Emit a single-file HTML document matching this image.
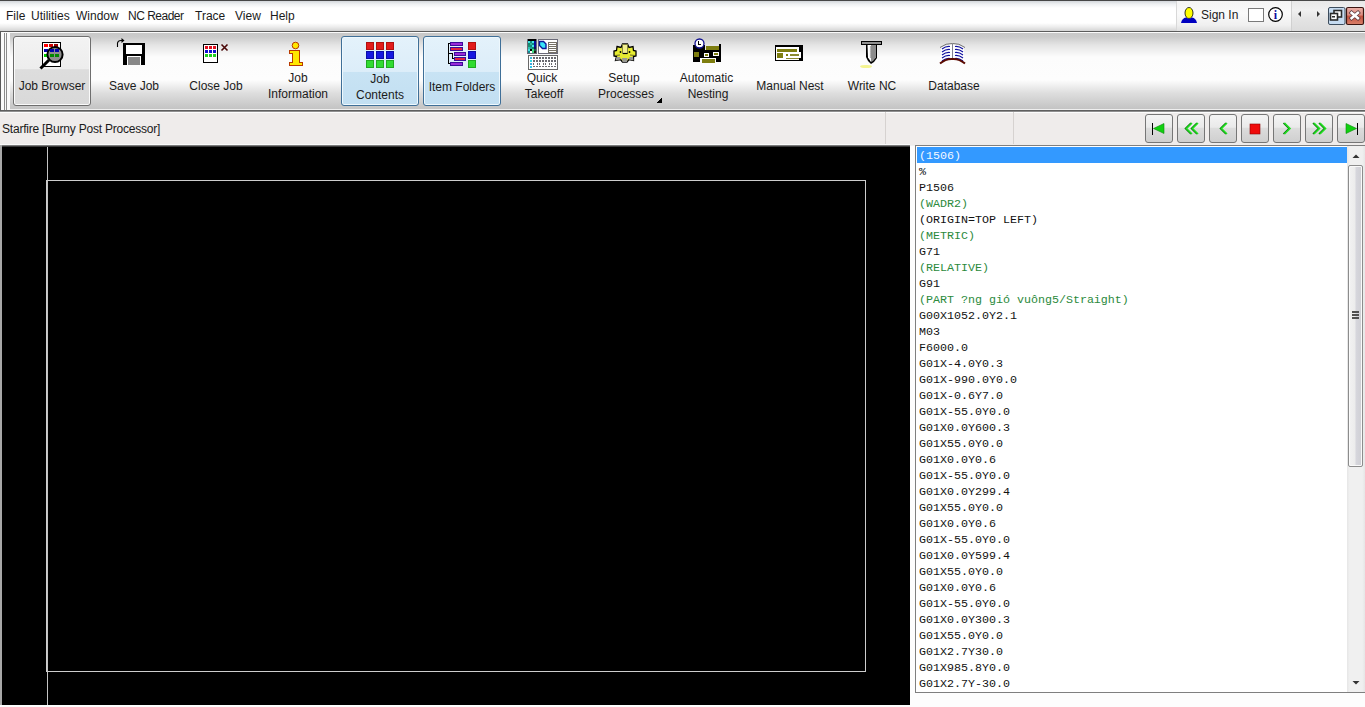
<!DOCTYPE html>
<html><head><meta charset="utf-8">
<style>
*{box-sizing:border-box;margin:0;padding:0}
html,body{width:1365px;height:707px;overflow:hidden;background:#f0f0f0;font-family:"Liberation Sans",sans-serif;font-size:12px;color:#1a1a1a}
.abs{position:absolute}
#menubar{position:absolute;left:0;top:0;width:1365px;height:31px;background:linear-gradient(#474747 0,#474747 1px,#d3d7db 1px,#eef0f2 4px,#ffffff 8px,#ffffff 23px,#ececec 27px,#d4d4d4 31px)}
.mi{position:absolute;top:9px;font-size:12px;color:#1b1b1b}
#toolbar{position:absolute;left:0;top:31px;width:1365px;height:82px;background:linear-gradient(#5c5c5c 0,#5c5c5c 1px,#ececec 1px,#ececec 2px,#c9c9c9 2px,#cbcbcb 6px,#e4e4e4 14px,#fcfcfc 26px,#fdfdfd 49px,#dedede 62px,#cacaca 74px,#c4c4c4 78px,#efefef 78px,#efefef 79px,#5f5f5f 79px,#5f5f5f 80px,#8f8f8f 80px,#8f8f8f 81px,#fcfcfc 81px)}
.tl{position:absolute;width:78px;text-align:center;font-size:12px;line-height:16px;color:#1b1b1b;white-space:nowrap}
.btn{position:absolute;top:5px;width:78px;height:69px;text-align:center}
.btn .lbl{position:absolute;left:-6px;right:-6px;font-size:12px;line-height:16px;color:#1b1b1b}
.btn svg{position:absolute;left:0;top:0}
#status{position:absolute;left:0;top:113px;width:1365px;height:32px;background:#efeceb}
#canvas{position:absolute;left:1px;top:146px;width:910px;height:559px;background:#000}
#list{position:absolute;left:915px;top:145px;width:450px;height:548px;background:#fff;border:1px solid #868686;border-right:none}
.row{position:absolute;left:919px;height:16px;font-family:"Liberation Mono",monospace;font-size:11.67px;line-height:16px;white-space:pre;color:#111}
.g{color:#2b8a3c}
.nav{position:absolute;top:114px;width:28px;height:29px;border:1px solid #767676;border-radius:3px;background:linear-gradient(#f4f4f4 0,#eaeaea 45%,#dcdcdc 50%,#cfcfcf 100%)}
</style></head><body>
<div id="menubar">
  <span class="mi" style="left:6px">File</span>
  <span class="mi" style="left:31px">Utilities</span>
  <span class="mi" style="left:76px">Window</span>
  <span class="mi" style="left:128px;letter-spacing:-0.5px">NC Reader</span>
  <span class="mi" style="left:195px">Trace</span>
  <span class="mi" style="left:235px">View</span>
  <span class="mi" style="left:270px">Help</span>
</div>
<div class="abs" style="left:1176px;top:1px;width:1px;height:30px;background:#d8d8d8"></div>
<div class="abs" style="left:1177px;top:1px;width:114px;height:30px;background:linear-gradient(#f4f4f4 0,#fafafa 40%,#f0f0f0 80%,#e0e0e0 100%)"></div>
<div class="abs" style="left:1291px;top:1px;width:1px;height:30px;background:#d0d0d0"></div>
<div class="abs" style="left:1292px;top:1px;width:73px;height:30px;background:linear-gradient(#e8e8e8 0,#f0f0f0 30%,#e4e4e4 60%,#dcdcdc 100%)"></div>
<span class="mi" style="left:1201px;top:8px">Sign In</span>
<svg class="abs" style="left:1165px;top:0" width="200" height="32" viewBox="1165 0 200 32">
 <ellipse cx="1189" cy="13" rx="4" ry="5.5" fill="#ffff00" stroke="#000" stroke-width="0.8"/>
 <path d="M1181,23 Q1182,18 1186,17.5 L1189,19 L1192,17.5 Q1196,18 1197,23 Z" fill="#0000c0"/>
 <rect x="1248.5" y="8.5" width="15" height="13" fill="#fff" stroke="#7a7a7a"/>
 <circle cx="1275.5" cy="14.5" r="6.8" fill="#fff" stroke="#000" stroke-width="1.2"/>
 <text x="1275.5" y="19" font-family="Liberation Serif" font-weight="bold" font-size="12" fill="#1010a0" text-anchor="middle">i</text>
 <path d="M1301,11 L1298,14 L1301,17 Z" fill="#333"/>
 <path d="M1317,11 L1320,14 L1317,17 Z" fill="#333"/>
  <defs><linearGradient id="cg" x1="0" y1="0" x2="0" y2="1"><stop offset="0" stop-color="#eab0a8"/><stop offset="0.45" stop-color="#dc8a7e"/><stop offset="0.5" stop-color="#c5523f"/><stop offset="1" stop-color="#d8806a"/></linearGradient></defs>
 <rect x="1328.5" y="7.5" width="16.5" height="17" rx="1.5" fill="#c6dbf0" stroke="#3c4c5c" stroke-width="1"/>
 <rect x="1334" y="10.5" width="7.5" height="6.5" fill="#fff" stroke="#2a2a2a" stroke-width="1.6"/>
 <rect x="1330.5" y="13.5" width="7" height="6.5" fill="#fff" stroke="#2a2a2a" stroke-width="1.6"/>
 <rect x="1332" y="16" width="3" height="1.5" fill="#2a2a2a"/>
 <rect x="1346.5" y="7.5" width="17" height="17" rx="1.5" fill="url(#cg)" stroke="#3a1410" stroke-width="1.2"/>
 <path d="M1350,11.5 L1359.5,19.5 M1359.5,11.5 L1350,19.5" stroke="#5a3a40" stroke-width="4.2"/>
 <path d="M1350.6,12 L1358.9,19 M1358.9,12 L1350.6,19" stroke="#fff" stroke-width="2.6"/>
</svg>

<div id="toolbar"></div>
<div class="abs" style="left:0;top:31px;width:1px;height:80px;background:#5a5a5a"></div>
<div class="abs" style="left:1px;top:32px;width:1364px;height:1px;background:#fafafa"></div>
<div class="abs" style="left:1px;top:32px;width:9px;height:78px;background:#fbfbfb"></div>
<div class="abs" style="left:4px;top:33px;width:1px;height:77px;background:#8c8c8c"></div>
<div class="abs" style="left:6px;top:33px;width:1px;height:77px;background:#8c8c8c"></div>
<!-- buttons -->
<div class="abs" style="left:13px;top:36px;width:78px;height:70px;border:1px solid #6e6e6e;border-radius:3px;background:linear-gradient(#f3f3f3 0,#ededed 47%,#dddddd 48%,#d9d9d9 100%);box-shadow:inset 0 0 0 1px #fafafa"></div>
<div class="abs" style="left:341px;top:36px;width:78px;height:70px;border:1px solid #3f6f98;border-radius:3px;background:linear-gradient(#e4f2fb 0,#dcedf9 51%,#c8e3f4 52%,#c2dff2 100%);box-shadow:inset 0 0 0 1px #eef8fd"></div>
<div class="abs" style="left:423px;top:36px;width:78px;height:70px;border:1px solid #3f6f98;border-radius:3px;background:linear-gradient(#e4f2fb 0,#dcedf9 51%,#c8e3f4 52%,#c2dff2 100%);box-shadow:inset 0 0 0 1px #eef8fd"></div>
<!-- labels -->
<div class="tl" style="left:13px;top:78px">Job Browser</div>
<div class="tl" style="left:95px;top:78px">Save Job</div>
<div class="tl" style="left:177px;top:78px">Close Job</div>
<div class="tl" style="left:259px;top:70px">Job<br>Information</div>
<div class="tl" style="left:341px;top:71px">Job<br>Contents</div>
<div class="tl" style="left:423px;top:79px">Item Folders</div>
<div class="tl" style="left:505px;top:70px"><span style="position:relative;left:-2px">Quick</span><br>Takeoff</div>
<div class="tl" style="left:587px;top:70px"><span style="position:relative;left:-2px">Setup</span><br>Processes</div>
<div class="tl" style="left:669px;top:70px"><span style="position:relative;left:-1.5px">Automatic</span><br>Nesting</div>
<div class="tl" style="left:751px;top:78px">Manual Nest</div>
<div class="tl" style="left:833px;top:78px">Write NC</div>
<div class="tl" style="left:915px;top:78px">Database</div>
<svg class="abs" style="left:0;top:0" width="1365" height="112" viewBox="0 0 1365 112" shape-rendering="crispEdges">
 <!-- Job Browser -->
 <rect x="42.5" y="42.5" width="18" height="23.5" fill="#fff" stroke="#000"/>
 <rect x="44" y="44" width="4" height="3" fill="#f00"/><rect x="49" y="44" width="4" height="3" fill="#c00"/><rect x="54" y="44" width="4" height="3" fill="#900"/>
 <rect x="44" y="49" width="4" height="3" fill="#00a"/><rect x="44" y="54" width="4" height="3" fill="#0c0"/>
 <circle cx="55" cy="54.5" r="7.6" fill="#8e8e8e" stroke="#000" stroke-width="2" shape-rendering="auto"/>
 <rect x="50" y="49" width="4" height="3" fill="#00a"/><rect x="55" y="49" width="4" height="3" fill="#00a"/>
 <rect x="50" y="54" width="4" height="3" fill="#080"/><rect x="55" y="54" width="4" height="3" fill="#080"/>
 <line x1="40.5" y1="68.5" x2="49" y2="60" stroke="#000" stroke-width="3" shape-rendering="auto"/>
 <!-- Save Job -->
 <rect x="123" y="43" width="22" height="22" fill="#000"/>
 <rect x="126" y="45" width="16" height="9" fill="#fff"/>
 <rect x="127" y="56" width="14" height="9" fill="#fff"/>
 <rect x="128" y="57" width="12" height="8" fill="#888"/>
 <path d="M117.5,47 L117.5,43 Q118,40.5 121,40.5 L122.5,40.5" fill="none" stroke="#000" stroke-width="1.1" shape-rendering="auto"/>
 <path d="M121.5,38 L124.5,40.5 L121.5,43 Z" fill="#000" shape-rendering="auto"/>
 <!-- Close Job -->
 <rect x="203.5" y="44.5" width="14" height="18" fill="#fff" stroke="#000" stroke-width="1.3"/>
 <rect x="205" y="46" width="3" height="3" fill="#e01020"/><rect x="209" y="46" width="3" height="3" fill="#e01020"/><rect x="213" y="46" width="3" height="3" fill="#e01020"/>
 <rect x="205" y="50" width="3" height="3" fill="#1010d0"/><rect x="209" y="50" width="3" height="3" fill="#1010d0"/><rect x="213" y="50" width="3" height="3" fill="#1010d0"/>
 <rect x="205" y="54" width="3" height="3" fill="#20d020"/><rect x="209" y="54" width="3" height="3" fill="#20d020"/><rect x="213" y="54" width="3" height="3" fill="#20d020"/>
 <path d="M221.5,44.5 L227.5,50.5 M227.5,44.5 L221.5,50.5" stroke="#4a0808" stroke-width="1.6" shape-rendering="auto"/>
 <!-- Job Info -->
 <circle cx="295.5" cy="45.5" r="3.3" fill="#ffe800" stroke="#b83a00" stroke-width="1" shape-rendering="auto"/>
 <path d="M289.5,50.5 H299.5 V62.5 H302.5 V65.5 H289.5 V62.5 H292.5 V53.5 H289.5 Z" fill="#ffe800" stroke="#b83a00" stroke-width="1"/>
 <!-- Job Contents -->
 <g shape-rendering="crispEdges">
 <g fill="#e21b1b" stroke="#b01010"><rect x="366.5" y="42.5" width="7" height="7"/><rect x="376.5" y="42.5" width="7" height="7"/><rect x="386.5" y="42.5" width="7" height="7"/></g>
 <g fill="#1818e0" stroke="#0c0ca8"><rect x="366.5" y="51.5" width="7" height="7"/><rect x="376.5" y="51.5" width="7" height="7"/><rect x="386.5" y="51.5" width="7" height="7"/></g>
 <g fill="#30dc30" stroke="#20a820"><rect x="366.5" y="60.5" width="7" height="7"/><rect x="376.5" y="60.5" width="7" height="7"/><rect x="386.5" y="60.5" width="7" height="7"/></g>
 </g>
 <!-- Item Folders -->
 <rect x="468.5" y="42.5" width="7" height="7" fill="#e21b1b" stroke="#b01010"/><rect x="468.5" y="51.5" width="7" height="7" fill="#1818e0" stroke="#0c0ca8"/><rect x="468.5" y="60.5" width="7" height="7" fill="#30dc30" stroke="#20a820"/>
 <path d="M450,43.5 H448.5 V63.5 H450 M448.5,53.5 H452.5 V58.5 H454" fill="none" stroke="#000"/>
 <rect x="450" y="42" width="13" height="4" fill="#3a0c9a"/><rect x="451" y="43" width="11" height="2" fill="#9a2ad8"/>
 <rect x="450" y="47" width="13" height="4" fill="#3a0c9a"/><rect x="451" y="48" width="11" height="2" fill="#e02040"/>
 <rect x="454" y="52" width="12" height="4" fill="#3a0c9a"/><rect x="455" y="53" width="10" height="2" fill="#9a2ad8"/>
 <rect x="454" y="57" width="12" height="4" fill="#3a0c9a"/><rect x="455" y="58" width="10" height="2" fill="#e02040"/>
 <rect x="450" y="62" width="13" height="4" fill="#3a0c9a"/><rect x="451" y="63" width="11" height="2" fill="#9a2ad8"/>
 <!-- Quick Takeoff -->
 <g shape-rendering="crispEdges">
 <rect x="527" y="39" width="10" height="15" fill="#6a6a78"/>
 <rect x="528" y="39" width="8" height="2" fill="#000"/>
 <rect x="528" y="41" width="2" height="2" fill="#40e0e0"/> <rect x="530" y="41" width="2" height="2" fill="#108a80"/> <rect x="532" y="41" width="2" height="2" fill="#40e8e8"/> <rect x="534" y="41" width="2" height="2" fill="#0a0a98"/>
 <rect x="528" y="43" width="2" height="2" fill="#108a70"/> <rect x="530" y="43" width="2" height="2" fill="#30b0a0"/> <rect x="532" y="43" width="2" height="2" fill="#108a80"/> <rect x="534" y="43" width="2" height="2" fill="#0a0a98"/>
 <rect x="528" y="45" width="2" height="2" fill="#1a9070"/> <rect x="530" y="45" width="2" height="2" fill="#108a80"/> <rect x="532" y="45" width="2" height="2" fill="#40e8e8"/> <rect x="534" y="45" width="2" height="2" fill="#0a0a98"/>
 <rect x="528" y="47" width="2" height="2" fill="#30c0b0"/> <rect x="530" y="47" width="2" height="2" fill="#20a090"/> <rect x="532" y="47" width="2" height="2" fill="#108a70"/> <rect x="534" y="47" width="2" height="2" fill="#101060"/>
 <rect x="528" y="49" width="2" height="2" fill="#40e0e0"/> <rect x="530" y="49" width="2" height="2" fill="#000000"/> <rect x="532" y="49" width="2" height="2" fill="#40e888"/> <rect x="534" y="49" width="2" height="2" fill="#1a5a40"/>
 <rect x="528" y="51" width="2" height="2" fill="#108a90"/> <rect x="530" y="51" width="2" height="2" fill="#ffffff"/> <rect x="532" y="51" width="2" height="2" fill="#40d880"/> <rect x="534" y="51" width="2" height="2" fill="#201a10"/>
 <rect x="538.5" y="39.5" width="19" height="14" fill="#fff" stroke="#6a6a78"/>
 <path d="M539.5,41.5 H543.5 L546,44 V48.5 H542.5 L539.5,45.5 Z" fill="#38e4f8" stroke="#0a1a9a" stroke-width="1.4" shape-rendering="auto"/>
 <rect x="547.5" y="41.5" width="9" height="11" fill="#757065"/>
 <path d="M548.5,43 H555.5 M548.5,45 H555.5 M548.5,47 H555.5 M548.5,49 H555.5 M548.5,51 H555.5" stroke="#fff" stroke-width="1"/>
 <rect x="528.5" y="55.5" width="29" height="14" fill="#fff" stroke="#686868"/>
 <rect x="530" y="57" width="2" height="2" fill="#40b8d8"/><rect x="530" y="60" width="2" height="2" fill="#30d8e0"/><rect x="530" y="63" width="2" height="2" fill="#40a8e0"/><rect x="530" y="66" width="2" height="2" fill="#30c8e8"/>
 <g fill="#6a6a70">
  <rect x="533" y="57" width="2" height="2"/><rect x="533" y="60" width="2" height="2"/><rect x="533" y="63" width="1" height="2"/><rect x="533" y="66" width="2" height="1"/>
  <rect x="536" y="57" width="2" height="2"/><rect x="536" y="60" width="2" height="2"/><rect x="537" y="63" width="1" height="2"/><rect x="536" y="66" width="2" height="1"/>
  <rect x="539" y="57" width="2" height="2"/><rect x="539" y="60" width="2" height="2"/><rect x="539" y="63" width="1" height="2"/><rect x="539" y="66" width="2" height="1"/>
  <rect x="542" y="57" width="2" height="2"/><rect x="542" y="60" width="2" height="2"/><rect x="543" y="63" width="1" height="2"/><rect x="542" y="66" width="2" height="1"/>
  <rect x="545" y="57" width="2" height="2"/><rect x="545" y="60" width="2" height="2"/><rect x="545" y="63" width="1" height="2"/><rect x="545" y="66" width="2" height="1"/>
  <rect x="548" y="57" width="2" height="2"/><rect x="548" y="60" width="2" height="2"/><rect x="549" y="63" width="1" height="2"/><rect x="548" y="66" width="2" height="1"/>
  <rect x="551" y="57" width="2" height="2"/><rect x="551" y="60" width="2" height="2"/><rect x="551" y="63" width="1" height="2"/><rect x="551" y="66" width="2" height="1"/>
  <rect x="554" y="57" width="2" height="2"/><rect x="554" y="60" width="2" height="2"/><rect x="555" y="63" width="1" height="2"/><rect x="554" y="66" width="2" height="1"/>
 </g>
 </g>
 <!-- Setup gear -->
 <g shape-rendering="auto">
 <path d="M617,46.5 L621,47.5 L622.5,44 H627.5 L629,47.5 L633,46.5 L633.5,50.5 L636,51 V56 L633.5,56.5 L633.5,60.5 L629,59.5 L627,62 H622.5 L620.5,59.5 L615.5,60.5 L616.5,56.5 L614,56 V51 L616.5,50.5 Z" fill="#e6ec30" stroke="#000" stroke-width="1.3"/>
 <path d="M615.5,60.5 L616.5,57 L620,57 L620.5,59.5 Z M622,58 H627.5 L627,62 H622.5 Z M629,59.5 L629.5,57 L633,57 L633.5,60.5 Z" fill="#9a9a94"/>
 <path d="M615,55.5 L620,55 M630,55 L635,55.5" stroke="#6a6a20" stroke-width="1"/>
 <rect x="622.5" y="44.5" width="5" height="9" fill="#f2f090" stroke="#7a7a40" stroke-width="0.9"/>
 <path d="M623,53.5 H627.5" stroke="#000" stroke-width="1.2"/>
 <circle cx="620.5" cy="52" r="0.9" fill="#000"/><circle cx="629.5" cy="52" r="0.9" fill="#000"/>
 </g>
 <!-- Automatic Nesting -->
 <rect x="693" y="45" width="12" height="6" fill="#000"/>
 <rect x="693" y="50" width="28" height="8" fill="#000"/>
 <rect x="719" y="44" width="2" height="18" fill="#000"/>
 <rect x="716" y="57" width="5" height="5" fill="#000"/>
 <rect x="693" y="57" width="7" height="5" fill="#000"/>
 <rect x="706" y="46" width="13" height="4" fill="#7e7e10"/>
 <rect x="694" y="52" width="5" height="5" fill="#7e7e10"/>
 <rect x="704" y="53" width="5" height="4" fill="#fff"/><rect x="705" y="54" width="3" height="2" fill="#7e7e10"/>
 <rect x="713" y="52" width="6" height="4" fill="#fff"/><rect x="714" y="53" width="4" height="2" fill="#7e7e10"/>
 <rect x="702" y="59" width="13" height="4" fill="#7e7e10"/>
 <circle cx="699.5" cy="43.5" r="4.5" fill="#fff" stroke="#101090" stroke-width="1.3" shape-rendering="auto"/>
 <path d="M698.5,41 V44.5 H701" stroke="#000" stroke-width="1.2" fill="none"/>
 <!-- Manual Nest -->
 <rect x="775" y="45" width="28" height="16" fill="#000"/>
 <rect x="776" y="47" width="23" height="13" fill="#fff"/>
 <rect x="799" y="52" width="2" height="6" fill="#fff"/>
 <rect x="777" y="49" width="20" height="3" fill="#7e7e10"/>
 <rect x="777" y="53" width="6" height="5" fill="#7e7e10"/>
 <rect x="786" y="54" width="2" height="2" fill="#7e7e10"/><rect x="790" y="54" width="9" height="2" fill="#8a8a30"/>
 <rect x="786" y="58" width="13" height="1" fill="#8a8a30"/>
 <!-- Write NC -->
 <ellipse cx="866" cy="66.5" rx="6" ry="1.6" fill="#f4f490" shape-rendering="auto"/>
 <rect x="861" y="41" width="21" height="4" fill="#000"/>
 <rect x="862" y="42" width="19" height="2" fill="#909090"/>
 <path d="M866,45 H877 V58 L874,62 L871,64 L868,61 L866,57 Z" fill="#000" shape-rendering="auto"/>
 <path d="M867.5,45 H871 V62 L868,57.5 Z" fill="#fff" shape-rendering="auto"/>
 <path d="M871,45 H876 V57.5 L873,61 L871,62 Z" fill="#8c8c8c" shape-rendering="auto"/>
 <path d="M871,46 L869.5,47 L871,48 L869.5,49 L871,50 L869.5,51 L871,52 L869.5,53 L871,54 L869.5,55 L871,56 L869.5,57 L871,58 Z" fill="#8c8c8c" shape-rendering="auto"/>
 <!-- Database book -->
 <g shape-rendering="auto">
 <path d="M940,47.5 Q946,43 952.5,43.5 Q959,43 965,47.5" fill="none" stroke="#707070" stroke-width="1"/>
 <path d="M941,48 Q946,44.5 952.5,44.5 Q959,44.5 964,48 V62 Q958,59 952.5,59.5 Q947,59 941,62 Z" fill="#fff"/>
 <line x1="952.5" y1="44" x2="952.5" y2="59" stroke="#808090"/>
 <g stroke="#1010a0" stroke-width="1.2" fill="none">
 <path d="M942,49 Q946,46 950,46.5 M942,52 Q946,49 950,49.5 M942,55 Q946,52 950,52.5 M942,58 Q946,55 950,55.5 M942,61 Q946,58 950,58.5"/>
 <path d="M955,46.5 Q959,46 963,49 M955,49.5 Q959,49 963,52 M955,52.5 Q959,52 963,55 M955,55.5 Q959,55 963,58 M955,58.5 Q959,58 963,61"/>
 </g>
 <path d="M940,63.5 Q946,58.5 952.5,59 Q959,58.5 965,63.5" fill="none" stroke="#5a0a00" stroke-width="2"/>
 </g>
 <!-- setup dropdown arrow -->
 <path d="M657,102.5 L662,97.5 L662,102.5 Z" fill="#000"/>
</svg>
<div id="status">
  <span class="abs" style="left:2px;top:9px;letter-spacing:-0.21px">Starfire [Burny Post Processor]</span>
</div>
<div class="abs" style="left:885px;top:112px;width:1px;height:32px;background:#d6d2d0"></div>
<div class="abs" style="left:1013px;top:112px;width:1px;height:32px;background:#d6d2d0"></div>
<div class="nav" style="left:1145px"></div>
<div class="nav" style="left:1177px"></div>
<div class="nav" style="left:1209px"></div>
<div class="nav" style="left:1241px"></div>
<div class="nav" style="left:1273px"></div>
<div class="nav" style="left:1305px"></div>
<div class="nav" style="left:1337px"></div>
<svg class="abs" style="left:1140px;top:112px" width="225" height="34" viewBox="1140 112 225 34">
 <g shape-rendering="crispEdges"><rect x="1152" y="123" width="1" height="12" fill="#000"/></g>
 <path d="M1153.5,128.5 L1164,123.5 V133.5 Z" fill="#10d010" stroke="#0a8a0a" stroke-width="0.6"/>
 <g fill="none" stroke-width="1.6" stroke-linejoin="miter">
  <path d="M1191,123 L1185.5,128.5 L1191,134" stroke="#0c7a0c"/><path d="M1197,123 L1191.5,128.5 L1197,134" stroke="#0c7a0c"/>
  <path d="M1192,123 L1186.5,128.5 L1192,134" stroke="#20e020"/><path d="M1198,123 L1192.5,128.5 L1198,134" stroke="#20e020"/>
  <path d="M1226,123 L1220.5,128.5 L1226,134" stroke="#0c7a0c"/><path d="M1227,123 L1221.5,128.5 L1227,134" stroke="#20e020"/>
  <path d="M1283.5,123 L1289,128.5 L1283.5,134" stroke="#0c7a0c"/><path d="M1284.5,123 L1290,128.5 L1284.5,134" stroke="#20e020"/>
  <path d="M1313,123 L1318.5,128.5 L1313,134" stroke="#0c7a0c"/><path d="M1319,123 L1324.5,128.5 L1319,134" stroke="#0c7a0c"/>
  <path d="M1314,123 L1319.5,128.5 L1314,134" stroke="#20e020"/><path d="M1320,123 L1325.5,128.5 L1320,134" stroke="#20e020"/>
 </g>
 <rect x="1250" y="124" width="10" height="10" fill="#f00a0a" stroke="#8a0000" stroke-width="0.6"/>
 <path d="M1356.5,128.5 L1346,123.5 V133.5 Z" fill="#10d010" stroke="#0a8a0a" stroke-width="0.6"/>
 <g shape-rendering="crispEdges"><rect x="1357" y="123" width="1" height="12" fill="#000"/></g>
</svg>

<div id="canvas" style="left:1px;top:146px;width:909px;height:559px"></div>
<div id="list"></div>
<div class="abs" style="left:910px;top:146px;width:455px;height:561px;background:#fdfdfd"></div>
<div class="abs" style="left:0;top:705px;width:910px;height:2px;background:#fdfdfd"></div>
<div class="abs" style="left:915px;top:145px;width:450px;height:548px;background:#fff;border:1px solid #7f7f7f;border-right:none"></div>
<div class="abs" style="left:917px;top:147px;width:430px;height:16px;background:#3399ff"></div>
<div class="row" style="top:148px;color:#f4f8ff">(1506)</div>
<div class="row" style="top:164px">%</div>
<div class="row" style="top:180px">P1506</div>
<div class="row g" style="top:196px">(WADR2)</div>
<div class="row" style="top:212px">(ORIGIN=TOP LEFT)</div>
<div class="row g" style="top:228px">(METRIC)</div>
<div class="row" style="top:244px">G71</div>
<div class="row g" style="top:260px">(RELATIVE)</div>
<div class="row" style="top:276px">G91</div>
<div class="row g" style="top:292px">(PART ?ng gió vuông5/Straight)</div>
<div class="row" style="top:308px">G00X1052.0Y2.1</div>
<div class="row" style="top:324px">M03</div>
<div class="row" style="top:340px">F6000.0</div>
<div class="row" style="top:356px">G01X-4.0Y0.3</div>
<div class="row" style="top:372px">G01X-990.0Y0.0</div>
<div class="row" style="top:388px">G01X-0.6Y7.0</div>
<div class="row" style="top:404px">G01X-55.0Y0.0</div>
<div class="row" style="top:420px">G01X0.0Y600.3</div>
<div class="row" style="top:436px">G01X55.0Y0.0</div>
<div class="row" style="top:452px">G01X0.0Y0.6</div>
<div class="row" style="top:468px">G01X-55.0Y0.0</div>
<div class="row" style="top:484px">G01X0.0Y299.4</div>
<div class="row" style="top:500px">G01X55.0Y0.0</div>
<div class="row" style="top:516px">G01X0.0Y0.6</div>
<div class="row" style="top:532px">G01X-55.0Y0.0</div>
<div class="row" style="top:548px">G01X0.0Y599.4</div>
<div class="row" style="top:564px">G01X55.0Y0.0</div>
<div class="row" style="top:580px">G01X0.0Y0.6</div>
<div class="row" style="top:596px">G01X-55.0Y0.0</div>
<div class="row" style="top:612px">G01X0.0Y300.3</div>
<div class="row" style="top:628px">G01X55.0Y0.0</div>
<div class="row" style="top:644px">G01X2.7Y30.0</div>
<div class="row" style="top:660px">G01X985.8Y0.0</div>
<div class="row" style="top:676px">G01X2.7Y-30.0</div>

<!-- scrollbar -->
<div class="abs" style="left:1347px;top:146px;width:18px;height:546px;background:linear-gradient(90deg,#e6e6e6,#f0f0f0 15%,#f0f0f0 85%,#e6e6e6)"></div>
<svg class="abs" style="left:1347px;top:146px" width="18" height="546" viewBox="0 0 18 546">
 <path d="M5.5,12 L9,8.5 L12.5,12 Z" fill="#333"/>
 <path d="M5.5,535 L9,538.5 L12.5,535 Z" fill="#333"/>
</svg>
<div class="abs" style="left:1348px;top:165px;width:15px;height:302px;border:1px solid #8c8c8c;border-radius:2px;background:linear-gradient(90deg,#f2f2f2 0,#ececec 45%,#d6d6dc 55%,#cfcfd4 100%);box-shadow:inset 0 0 0 1px #fafafa"></div>
<svg class="abs" style="left:1348px;top:308px" width="15" height="14" viewBox="0 0 15 14" shape-rendering="crispEdges">
 <path d="M4,4 H11 M4,7 H11 M4,10 H11" stroke="#505050" stroke-width="1.3"/>
</svg>
<!-- canvas drawing -->
<div class="abs" style="left:0;top:144px;width:910px;height:1px;background:#fafafa"></div>
<div class="abs" style="left:0;top:145px;width:910px;height:1px;background:#7a7a7a"></div>
<div class="abs" style="left:0;top:146px;width:910px;height:1px;background:#3a3a3a"></div>
<div class="abs" style="left:0;top:145px;width:2px;height:560px;background:#a8a8a8"></div>
<div class="abs" style="left:47px;top:147px;width:1px;height:558px;background:#c4c4c4"></div>
<div class="abs" style="left:46px;top:180px;width:820px;height:492px;border:1px solid #cdcdcd"></div>

</body></html>
